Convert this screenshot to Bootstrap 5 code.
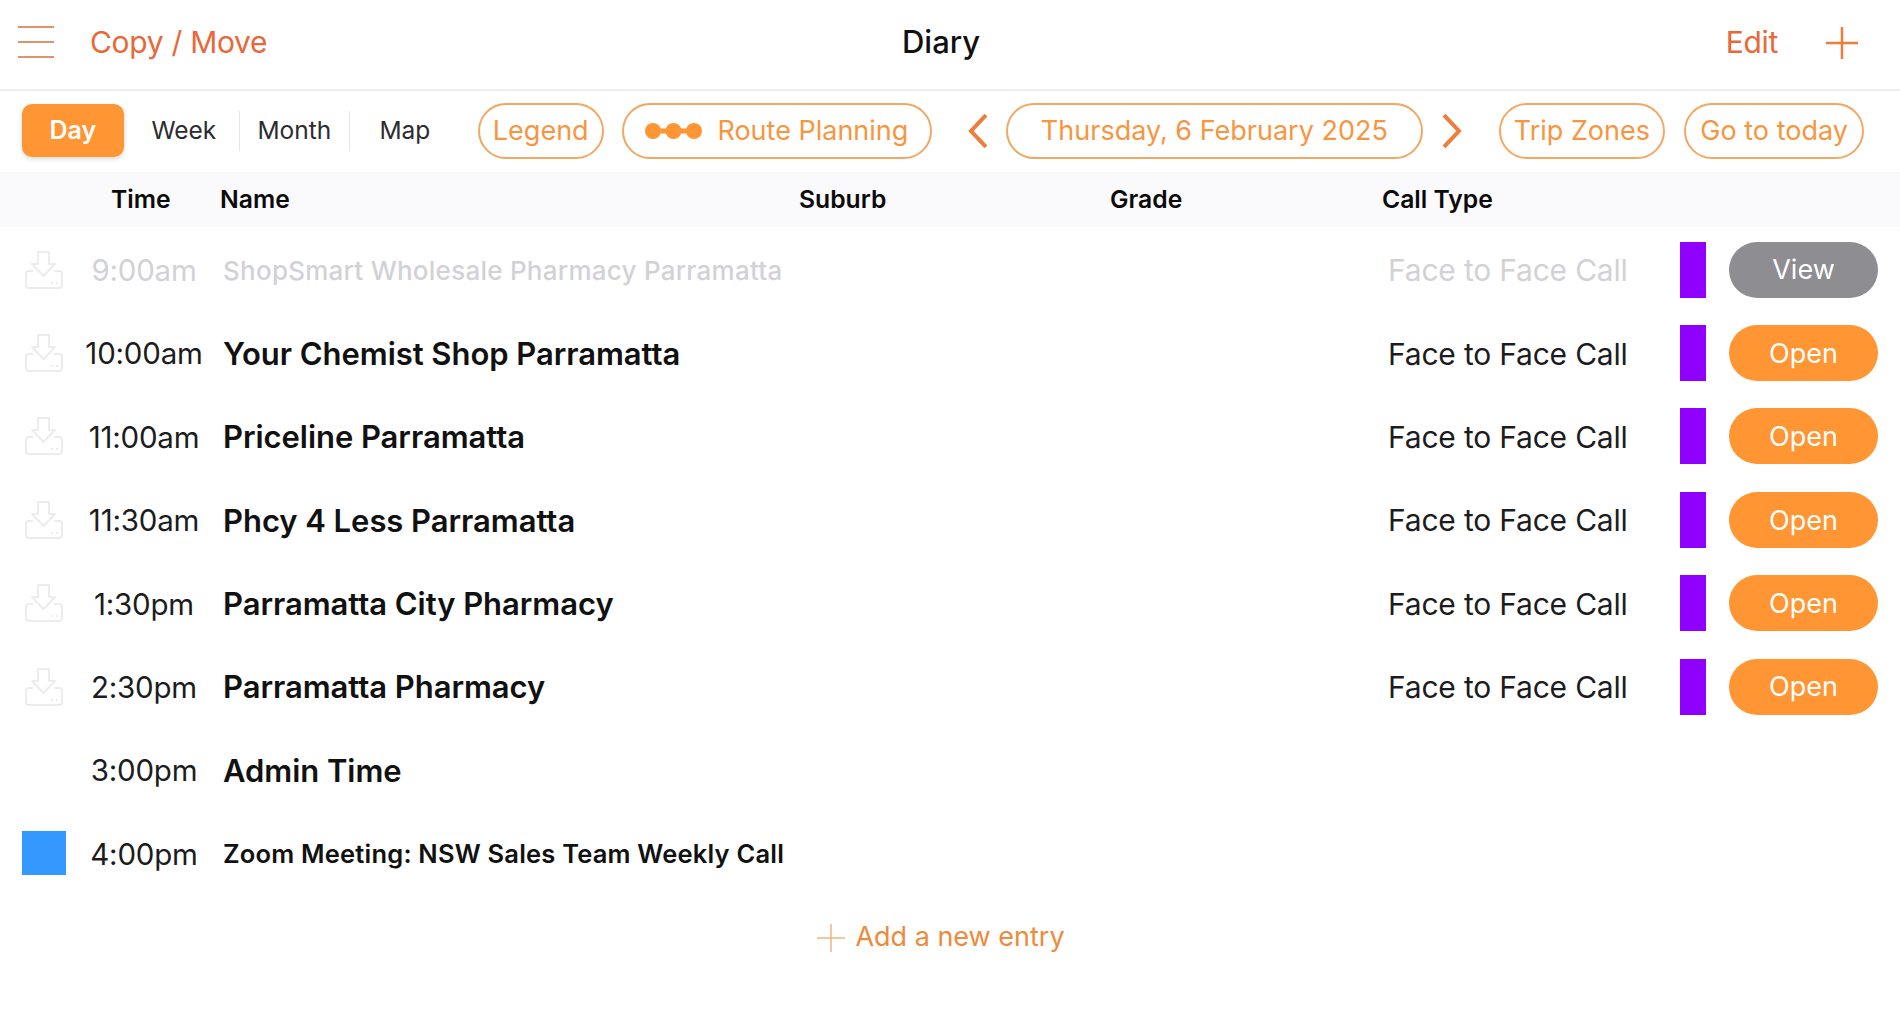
<!DOCTYPE html>
<html lang="en">
<head>
  <meta charset="UTF-8">
  <title>Diary</title>
  <link rel="stylesheet" href="https://cdn.jsdelivr.net/npm/bootstrap@5.3.0/dist/css/bootstrap.min.css">
  <style>
    body { font-family: Inter, "Liberation Sans", sans-serif; background: #fff; color: #111; overflow: hidden; }
    .topbar { height: 85px; border-bottom: 2px solid #eeeeee; padding: 0 42px 4px 18px; box-sizing: content-box; }
    .top-side { flex: 1 1 0; }
    .top-link { font-size: 30px; color: #e8683a; letter-spacing: -.3px; }
    .top-title { font-size: 31px; font-weight: 500; color: #111; margin-left: 6px; }
    .burger { width: 36px; gap: 13px; margin-right: 36px; margin-bottom: 2px; }
    .burger span { height: 2px; background: #e0936a; display: block; }
    .toolbar { height: 81px; padding: 12px 36px 0 22px; }
    .seg-on { width: 102px; height: 53px; margin-top: 1px; background: #ff9533; color: #fff; font-size: 25px; font-weight: 600; border-radius: 10px; box-shadow: 0 2px 5px rgba(0,0,0,.15); }
    .seg-wrap { height: 53px; margin-top: 1px; }
    .seg-item { font-size: 24.5px; color: #2c2c30; height: 40px; }
    .seg-week { width: 115px; padding-left: 5px; }
    .seg-month { width: 111px; border-left: 1px solid #e6e6e6; border-right: 1px solid #e6e6e6; }
    .seg-map { width: 110px; }
    .pill { height: 56px; border: 2px solid #f4a763; border-radius: 28px; color: #f7963f; font-size: 27px; background: #fff; }
    .pill-legend { width: 126px; margin-left: 18px; }
    .pill-route { width: 311px; margin-left: 18px; gap: 15px; }
    .pill-date { width: 417px; }
    .pill-trip { width: 167px; margin-left: 36px; }
    .pill-today { width: 180px; margin-left: 19px; }
    .chev-prev { margin: 10px 17px 0 35px; }
    .chev-next { margin: 10px 0 0 18px; }
    .headband { height: 55px; background: #faf9fb; font-size: 24.7px; font-weight: 600; color: #0b0b0b; }
    .hd-time { width: 220px; padding-left: 111px; }
    .hd-name { width: 579px; }
    .hd-suburb { width: 311px; }
    .hd-grade { width: 272px; }
    #rows { padding-top: 1px; }
    .diary-row { height: 83.4px; padding: 0 22px; }
    .cell-icon { width: 44px; }
    .cell-time { width: 154px; text-align: center; font-size: 29.5px; color: #1c1c1e; margin-right: 4px; letter-spacing: -.2px; padding-left: 2px; padding-top: 1px; }
    .cell-name { flex: 1 1 0; font-size: 31px; font-weight: 600; color: #111; letter-spacing: -.05px; padding-top: 2px; margin-left: -1px; }
    .cell-name-sm { font-size: 25.5px; letter-spacing: .2px; }
    .cell-type { width: 292px; font-size: 30px; color: #1c1c1e; letter-spacing: -.2px; padding-top: 2px; }
    .faded .cell-time, .faded .cell-type { color: #d2d2d6; }
    .faded .cell-name { color: #d2d2d6; font-weight: 500; font-size: 26px; letter-spacing: .25px; }
    .call-bar { width: 26px; height: 56px; background: #8f00ff; margin-right: 23px; }
    .row-btn { width: 149px; height: 56px; border-radius: 28px; color: #fff; font-size: 27px; background: #ff9533; padding-top: 2px; }
    .row-btn-view { background: #8e8d92; }
    .zoom-box { width: 44px; height: 44px; background: #3399ff; }
    .add-entry { height: 83px; font-size: 27px; color: #ee8a3c; gap: 10px; padding-right: 18px; padding-top: 2px; }
  </style>
</head>
<body>

  <!-- top bar -->
  <div class="topbar d-flex align-items-center">
    <div class="top-side d-flex align-items-center">
      <div class="burger d-flex flex-column"><span></span><span></span><span></span></div>
      <span class="top-link">Copy / Move</span>
    </div>
    <div class="top-title">Diary</div>
    <div class="top-side d-flex align-items-center justify-content-end">
      <span class="top-link me-5">Edit</span>
      <svg width="32" height="32" viewBox="0 0 32 32"><path d="M16 0V32M0 16H32" stroke="#ee7d3a" stroke-width="2.5" fill="none"/></svg>
    </div>
  </div>

  <!-- toolbar -->
  <div class="toolbar d-flex align-items-start">
    <div class="seg-on d-flex align-items-center justify-content-center">Day</div>
    <div class="seg-wrap d-flex align-items-center">
      <div class="seg-item seg-week d-flex align-items-center justify-content-center">Week</div>
      <div class="seg-item seg-month d-flex align-items-center justify-content-center">Month</div>
      <div class="seg-item seg-map d-flex align-items-center justify-content-center">Map</div>
    </div>
    <div class="pill pill-legend d-flex align-items-center justify-content-center">Legend</div>
    <div class="pill pill-route d-flex align-items-center justify-content-center">
      <svg width="57" height="18" viewBox="0 0 57 18"><path d="M9 9H48" stroke="#ff9533" stroke-width="5"/><circle cx="8" cy="9" r="8" fill="#ff9533"/><circle cx="28.500" cy="9" r="8" fill="#ff9533"/><circle cx="49" cy="9" r="8" fill="#ff9533"/></svg>
      <span>Route Planning</span>
    </div>
    <svg class="chev-prev" width="22" height="36" viewBox="0 0 22 36"><path d="M19 2 4 18l15 16" stroke="#ee7d3a" stroke-width="4" fill="none"/></svg>
    <div class="pill pill-date d-flex align-items-center justify-content-center">Thursday, 6 February 2025</div>
    <svg class="chev-next" width="22" height="36" viewBox="0 0 22 36"><path d="M3 2l15 16L3 34" stroke="#ee7d3a" stroke-width="4" fill="none"/></svg>
    <div class="pill pill-trip d-flex align-items-center justify-content-center">Trip Zones</div>
    <div class="pill pill-today d-flex align-items-center justify-content-center">Go to today</div>
  </div>

  <!-- column headings -->
  <div class="headband d-flex align-items-center">
    <span class="hd-time">Time</span>
    <span class="hd-name">Name</span>
    <span class="hd-suburb">Suburb</span>
    <span class="hd-grade">Grade</span>
    <span>Call Type</span>
  </div>

  <!-- rows are filled from the data below -->
  <div id="rows"></div>

  <div class="add-entry d-flex align-items-center justify-content-center">
    <svg width="28" height="28" viewBox="0 0 28 28"><path d="M14 0V28M0 14H28" stroke="#f3b482" stroke-width="1.500" fill="none"/></svg>
    <span>Add a new entry</span>
  </div>

  <script src="https://cdn.jsdelivr.net/npm/bootstrap@5.3.0/dist/js/bootstrap.bundle.min.js"></script>
  <script>
    const trayIcon = `
      <svg width="40" height="38" viewBox="0 0 40 38" fill="none" stroke="#ececee" stroke-width="2" stroke-linejoin="round">
        <path d="M14 1h11v12h6L19.500 25 8 13h6z"/>
        <path d="M9 20H5q-3 0-3 3v11q0 3 3 3h30q3 0 3-3V23q0-3-3-3h-5"/>
        <path d="M27 32h2M32 32h2"/>
      </svg>`;

    const rows = [
      { time: "9:00am", name: "ShopSmart Wholesale Pharmacy Parramatta", call: true, btn: "View", faded: true, small: true },
      { time: "10:00am", name: "Your Chemist Shop Parramatta", call: true, btn: "Open" },
      { time: "11:00am", name: "Priceline Parramatta", call: true, btn: "Open" },
      { time: "11:30am", name: "Phcy 4 Less Parramatta", call: true, btn: "Open" },
      { time: "1:30pm", name: "Parramatta City Pharmacy", call: true, btn: "Open" },
      { time: "2:30pm", name: "Parramatta Pharmacy", call: true, btn: "Open" },
      { time: "3:00pm", name: "Admin Time" },
      { time: "4:00pm", name: "Zoom Meeting: NSW Sales Team Weekly Call", small: true, zoom: true }
    ];

    let html = "";
    rows.forEach((r) => {
      let icon = r.call ? trayIcon : "";
      if (r.zoom) icon = '<div class="zoom-box"></div>';
      html += `
        <div class="diary-row d-flex align-items-center ${r.faded ? "faded" : ""}">
          <div class="cell-icon d-flex justify-content-center">${icon}</div>
          <div class="cell-time">${r.time}</div>
          <div class="cell-name ${r.small ? "cell-name-sm" : ""}">${r.name}</div>
      `;
      if (r.call) {
        html += `
          <div class="cell-type">Face to Face Call</div>
          <div class="call-bar"></div>
          <div class="row-btn ${r.btn === "View" ? "row-btn-view" : ""} d-flex align-items-center justify-content-center">${r.btn}</div>
        `;
      }
      html += "</div>";
    });
    document.getElementById("rows").innerHTML = html;
  </script>
</body>
</html>
